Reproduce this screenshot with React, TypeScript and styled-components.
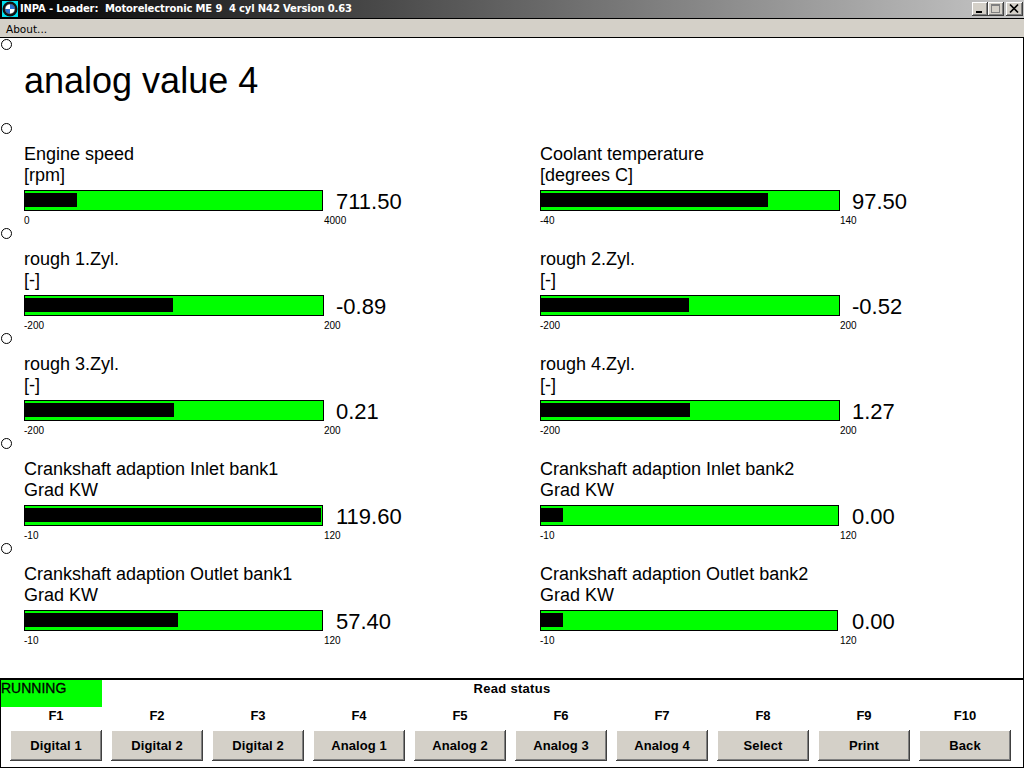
import { createGlobalStyle } from 'styled-components';
import styled from 'styled-components';

const GlobalStyle = createGlobalStyle`
  html, body {
    margin: 0;
    padding: 0;
    background: #fff;
  }
  * {
    box-sizing: border-box;
  }
`;

type Gauge = {
  name: string;
  unit: string;
  min: number;
  max: number;
  value: string;
  barWidth: number;
};

const rows: Gauge[][] = [
  [
    { name: 'Engine speed', unit: '[rpm]', min: 0, max: 4000, value: '711.50', barWidth: 299 },
    { name: 'Coolant temperature', unit: '[degrees C]', min: -40, max: 140, value: '97.50', barWidth: 300 },
  ],
  [
    { name: 'rough 1.Zyl.', unit: '[-]', min: -200, max: 200, value: '-0.89', barWidth: 300 },
    { name: 'rough 2.Zyl.', unit: '[-]', min: -200, max: 200, value: '-0.52', barWidth: 300 },
  ],
  [
    { name: 'rough 3.Zyl.', unit: '[-]', min: -200, max: 200, value: '0.21', barWidth: 300 },
    { name: 'rough 4.Zyl.', unit: '[-]', min: -200, max: 200, value: '1.27', barWidth: 300 },
  ],
  [
    { name: 'Crankshaft adaption Inlet bank1', unit: 'Grad KW', min: -10, max: 120, value: '119.60', barWidth: 299 },
    { name: 'Crankshaft adaption Inlet bank2', unit: 'Grad KW', min: -10, max: 120, value: '0.00', barWidth: 299 },
  ],
  [
    { name: 'Crankshaft adaption Outlet bank1', unit: 'Grad KW', min: -10, max: 120, value: '57.40', barWidth: 299 },
    { name: 'Crankshaft adaption Outlet bank2', unit: 'Grad KW', min: -10, max: 120, value: '0.00', barWidth: 298 },
  ],
];

const keys = [
  ['F1', 'Digital 1'],
  ['F2', 'Digital 2'],
  ['F3', 'Digital 2'],
  ['F4', 'Analog 1'],
  ['F5', 'Analog 2'],
  ['F6', 'Analog 3'],
  ['F7', 'Analog 4'],
  ['F8', 'Select'],
  ['F9', 'Print'],
  ['F10', 'Back'],
];

const BmwIcon = () => (
  <svg width="16" height="16" viewBox="0 0 16 16">
    <rect width="16" height="16" fill="#00e0f0" />
    <circle cx="8" cy="8" r="7.5" fill="#111" />
    <circle cx="8" cy="8" r="5" fill="#fff" />
    <path d="M8 8V3a5 5 0 0 1 5 5zM8 8v5a5 5 0 0 1-5-5z" fill="#2a6fd0" />
    <circle cx="8" cy="8" r="5" fill="none" stroke="#333" strokeWidth="0.6" />
  </svg>
);

const GaugeCell = ({ gauge }: { gauge: Gauge }) => {
  const ratio = (parseFloat(gauge.value) - gauge.min) / (gauge.max - gauge.min);
  const fillWidth = Math.floor(ratio * (gauge.barWidth - 2));
  return (
    <Cell>
      <Label>{gauge.name}</Label>
      <Label>{gauge.unit}</Label>
      <BarLine>
        <Bar $width={gauge.barWidth}>
          <Fill style={{ width: fillWidth }} />
        </Bar>
        <Value>{gauge.value}</Value>
      </BarLine>
      <Scale>
        <span>{gauge.min}</span>
        <span>{gauge.max}</span>
      </Scale>
    </Cell>
  );
};

export default function App() {
  return (
    <Window>
      <GlobalStyle />
      <TitleBar>
        <BmwIcon />
        <TitleText>{'INPA - Loader:  Motorelectronic ME 9  4 cyl N42 Version 0.63'}</TitleText>
        <WinButtons>
          <WinButton>
            <svg width="15" height="13" viewBox="0 0 15 13">
              <rect x="4" y="9" width="6" height="2" fill="#000" />
            </svg>
          </WinButton>
          <WinButton>
            <svg width="15" height="13" viewBox="0 0 15 13">
              <rect x="3.5" y="2.5" width="8" height="8" fill="none" stroke="#808080" />
              <rect x="3" y="2" width="9" height="2" fill="#808080" />
            </svg>
          </WinButton>
          <CloseButton>
            <svg width="16" height="13" viewBox="0 0 16 13">
              <path d="M4 2.5l8 8M12 2.5l-8 8" stroke="#000" strokeWidth="1.7" fill="none" />
            </svg>
          </CloseButton>
        </WinButtons>
      </TitleBar>
      <MenuBar>About...</MenuBar>
      <Main>
        <Header>
          <Rail>
            <Dot />
          </Rail>
          <Title>analog value 4</Title>
        </Header>
        {rows.map((row) => (
          <Row key={row[0].name}>
            <Rail>
              <Dot />
            </Rail>
            {row.map((gauge) => (
              <GaugeCell key={gauge.name} gauge={gauge} />
            ))}
          </Row>
        ))}
      </Main>
      <Panel>
        <StatusLine>
          <Running>RUNNING</Running>
          <StatusText>Read status</StatusText>
        </StatusLine>
        <Keys>
          {keys.map(([key, text]) => (
            <Key key={key}>
              <KeyName>{key}</KeyName>
              <KeyButton>{text}</KeyButton>
            </Key>
          ))}
        </Keys>
      </Panel>
    </Window>
  );
}

const Window = styled.div`
  width: 1024px;
  height: 768px;
  display: flex;
  flex-direction: column;
  overflow: hidden;
  font-family: 'Liberation Sans', Arial, sans-serif;
  color: #000;
`;

const TitleBar = styled.div`
  height: 19px;
  flex: none;
  display: flex;
  align-items: center;
  padding: 0 1px 1px 2px;
  border-bottom: 1px solid #000;
  background: linear-gradient(to right, #000 0%, #c6c6c6 100%);
`;

const TitleText = styled.div`
  margin-left: 2px;
  color: #fff;
  font-family: 'DejaVu Sans', sans-serif;
  font-size: 10px;
  font-weight: 700;
  letter-spacing: -0.14px;
  white-space: pre;
  flex: 1;
`;

const WinButtons = styled.div`
  display: flex;
  margin-top: 1px;
`;

const WinButton = styled.div`
  width: 16px;
  height: 14px;
  background: #d4d0c8;
  box-shadow: inset -1px -1px 0 #404040, inset 1px 1px 0 #fff, inset -2px -2px 0 #808080;
  display: flex;
`;

const CloseButton = styled(WinButton)`
  margin-left: 2px;
  width: 17px;
`;

const MenuBar = styled.div`
  height: 19px;
  flex: none;
  padding: 3px 0 0 6px;
  background: #d4d0c8;
  border-bottom: 1px solid #000;
  font-family: 'DejaVu Sans', sans-serif;
  font-size: 10.5px;
  line-height: 14px;
`;

const Main = styled.div`
  flex: 1;
  background: #fff;
  border-right: 1px solid #000;
`;

const Header = styled.div`
  height: 84px;
  display: flex;
`;

const Rail = styled.div`
  width: 24px;
  flex: none;
  padding: 1px 0 0 1px;
`;

const Dot = styled.div`
  width: 11px;
  height: 11px;
  border: 1px solid #000;
  border-radius: 50%;
`;

const Title = styled.div`
  margin-top: 20px;
  font-size: 36px;
  line-height: 46px;
`;

const Row = styled.div`
  height: 105px;
  display: grid;
  grid-template-columns: 24px 516px 1fr;
`;

const Cell = styled.div`
  padding-top: 22px;
`;

const Label = styled.div`
  font-size: 18px;
  line-height: 21px;
`;

const BarLine = styled.div`
  display: grid;
  grid-template-columns: 312px auto;
  grid-template-rows: 21px;
  align-items: center;
  height: 21px;
  margin-top: 4px;
`;

const Bar = styled.div<{ $width: number }>`
  width: ${(p) => p.$width}px;
  height: 21px;
  padding: 2px 0 3px;
  background: #00ff00;
  border: 1px solid #000;
`;

const Fill = styled.div`
  height: 100%;
  background: #000;
`;

const Value = styled.div`
  font-size: 22px;
  line-height: 24px;
  padding-top: 3px;
`;

const Scale = styled.div`
  width: 346px;
  display: flex;
  justify-content: space-between;
  margin-top: 4px;
  font-size: 10px;
  line-height: 12px;
  span:last-child {
    width: 46px;
  }
`;

const Panel = styled.div`
  height: 90px;
  flex: none;
  border: 1px solid #000;
  border-top-width: 2px;
  background: #fff;
`;

const StatusLine = styled.div`
  height: 27px;
  display: grid;
  grid-template-columns: 101px 1fr 101px;
`;

const Running = styled.div`
  background: #00ff00;
  font-size: 14px;
  line-height: 16px;
  -webkit-text-stroke: 0.3px #000;
`;

const StatusText = styled.div`
  text-align: center;
  font-size: 13px;
  font-weight: 700;
  letter-spacing: 0.3px;
  line-height: 18px;
`;

const Keys = styled.div`
  display: flex;
  gap: 9px;
  padding: 1px 0 0 9px;
`;

const Key = styled.div`
  width: 92px;
  display: flex;
  flex-direction: column;
  align-items: center;
`;

const KeyName = styled.div`
  height: 22px;
  padding-top: 1px;
  font-size: 13px;
  font-weight: 700;
  line-height: 14px;
`;

const KeyButton = styled.div`
  width: 92px;
  height: 31px;
  display: flex;
  align-items: center;
  justify-content: center;
  background: #d4d0c8;
  box-shadow: inset -1px -1px 0 #404040, inset 1px 1px 0 #fff, inset -2px -2px 0 #808080;
  font-size: 13px;
  font-weight: 700;
  letter-spacing: 0.1px;
`;
